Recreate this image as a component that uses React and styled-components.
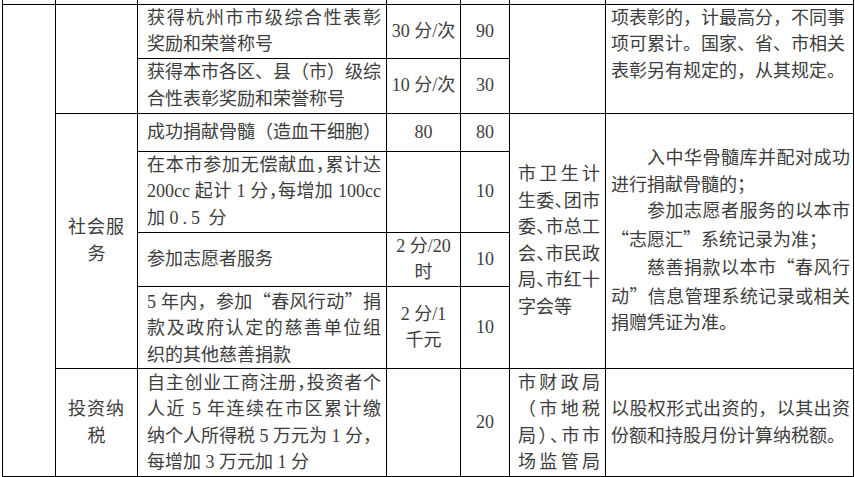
import styled, { createGlobalStyle } from 'styled-components';

const GlobalStyle = createGlobalStyle`
  html, body {
    margin: 0;
    padding: 0;
    background: #fff;
  }
  body {
    width: 855px;
    height: 477px;
    overflow: hidden;
    font-family: "Liberation Serif", "Noto Sans CJK SC", serif;
  }
`;

const Page = styled.div`
  padding-left: 2px;
`;

const Sheet = styled.table`
  border-collapse: collapse;
  table-layout: fixed;
  width: 851px;
  color: #3d3d3d;
  font-size: 18px;
  line-height: 26.5px;
`;

const Col = styled.col`
  width: ${(p) => p.$w}px;
`;

const Row = styled.tr`
  height: ${(p) => p.$h}px;
`;

const Cell = styled.td`
  border: 1px solid #000;
  padding: ${(p) => p.$pad || '0'};
  text-align: ${(p) => p.$align || 'left'};
  vertical-align: ${(p) => p.$valign || 'middle'};
  overflow: hidden;
`;

const StubCell = styled.td`
  border: 1px solid #000;
  border-top: none;
  padding: 0;
`;

// 一行文字：非末行两端对齐，仿 Word 的分散排版
const Line = styled.div`
  white-space: nowrap;
  text-align: ${(p) => (p.$fill ? 'justify' : 'inherit')};
  text-align-last: ${(p) => (p.$fill ? 'justify' : 'auto')};
  text-indent: ${(p) => (p.$indent ? '2em' : '0')};
  letter-spacing: ${(p) => p.$spacing || 'normal'};
`;

// 标点挤压成半角
const Punct = styled.span`
  font-feature-settings: "halt";
`;

// 中文引号用全角字形
const Quote = styled.span`
  font-family: "Noto Sans CJK SC", sans-serif;
  font-feature-settings: "fwid";
`;

const Spaced = styled.span`
  letter-spacing: 4px;
`;

const Lines = ({ items, fill = true }) => (
  <>
    {items.map((t, i) => (
      <Line key={i} $fill={fill && i < items.length - 1}>{t}</Line>
    ))}
  </>
);

const ITEM_PAD = '0 5px 0 9px';
const NOTE_PAD = '0 3px 0 5px';
const DEPT_PAD = '0 5px 0 8px';

const App = () => (
  <Page>
    <GlobalStyle />
    <Sheet>
      <colgroup>
        <Col $w={53} />
        <Col $w={82} />
        <Col $w={249} />
        <Col $w={74} />
        <Col $w={49} />
        <Col $w={96} />
        <Col $w={248} />
      </colgroup>
      <tbody>
        <Row $h={4}>
          <StubCell />
          <StubCell />
          <StubCell />
          <StubCell />
          <StubCell />
          <StubCell />
          <StubCell />
        </Row>

        {/* 表彰奖励 */}
        <Row $h={53}>
          <Cell rowSpan={7} />
          <Cell rowSpan={2} />
          <Cell $pad={ITEM_PAD}>
            <Lines items={['获得杭州市市级综合性表彰', '奖励和荣誉称号']} />
          </Cell>
          <Cell $align="center">30 分/次</Cell>
          <Cell $align="center">90</Cell>
          <Cell rowSpan={2} />
          <Cell rowSpan={2} $valign="top" $pad={NOTE_PAD}>
            <Lines
              items={[
                '项表彰的，计最高分，不同事',
                '项可累计。国家、省、市相关',
                '表彰另有规定的，从其规定。',
              ]}
              fill={false}
            />
          </Cell>
        </Row>
        <Row $h={55}>
          <Cell $pad={ITEM_PAD}>
            <Lines items={['获得本市各区、县（市）级综', '合性表彰奖励和荣誉称号']} />
          </Cell>
          <Cell $align="center">10 分/次</Cell>
          <Cell $align="center">30</Cell>
        </Row>

        {/* 社会服务 */}
        <Row $h={38}>
          <Cell rowSpan={4} $align="center">
            <Line $spacing="1px">社会服</Line>
            <Line>务</Line>
          </Cell>
          <Cell $pad={ITEM_PAD}>成功捐献骨髓（造血干细胞）</Cell>
          <Cell $align="center">80</Cell>
          <Cell $align="center">80</Cell>
          <Cell rowSpan={4} $pad={DEPT_PAD}>
            <Line $fill>市卫生计</Line>
            <Line $fill>生委<Punct>、</Punct>团市</Line>
            <Line $fill>委<Punct>、</Punct>市总工</Line>
            <Line $fill>会<Punct>、</Punct>市民政</Line>
            <Line $fill>局<Punct>、</Punct>市红十</Line>
            <Line>字会等</Line>
          </Cell>
          <Cell rowSpan={4} $pad={NOTE_PAD}>
            <Line $fill $indent>入中华骨髓库并配对成功</Line>
            <Line>进行捐献骨髓的；</Line>
            <Line $fill $indent>参加志愿者服务的以本市</Line>
            <Line><Quote>“</Quote>志愿汇<Quote>”</Quote>系统记录为准；</Line>
            <Line $fill $indent>慈善捐款以本市<Quote>“</Quote>春风行</Line>
            <Line $fill>动<Quote>”</Quote>信息管理系统记录或相关</Line>
            <Line>捐赠凭证为准。</Line>
          </Cell>
        </Row>
        <Row $h={81}>
          <Cell $pad={ITEM_PAD}>
            <Line $fill>在本市参加无偿献血<Punct>，</Punct>累计达</Line>
            <Line $fill>200cc 起计 1 分<Punct>，</Punct>每增加 100cc</Line>
            <Line>加 <Spaced>0.5</Spaced> 分</Line>
          </Cell>
          <Cell />
          <Cell $align="center">10</Cell>
        </Row>
        <Row $h={53}>
          <Cell $pad={ITEM_PAD}>参加志愿者服务</Cell>
          <Cell $align="center">
            <Line>2 分/20</Line>
            <Line>时</Line>
          </Cell>
          <Cell $align="center">10</Cell>
        </Row>
        <Row $h={81}>
          <Cell $pad={ITEM_PAD}>
            <Line $fill>5 年内，参加<Quote>“</Quote>春风行动<Quote>”</Quote>捐</Line>
            <Line $fill>款及政府认定的慈善单位组</Line>
            <Line>织的其他慈善捐款</Line>
          </Cell>
          <Cell $align="center">
            <Line>2 分/1</Line>
            <Line>千元</Line>
          </Cell>
          <Cell $align="center">10</Cell>
        </Row>

        {/* 投资纳税 */}
        <Row $h={108}>
          <Cell $align="center">
            <Line $spacing="1px">投资纳</Line>
            <Line>税</Line>
          </Cell>
          <Cell $pad={ITEM_PAD}>
            <Line $fill>自主创业工商注册<Punct>，</Punct>投资者个</Line>
            <Line $fill>人近 5 年连续在市区累计缴</Line>
            <Line $fill>纳个人所得税 5 万元为 1 分，</Line>
            <Line>每增加 3 万元加 1 分</Line>
          </Cell>
          <Cell />
          <Cell $align="center">20</Cell>
          <Cell $pad={DEPT_PAD}>
            <Line $fill>市财政局</Line>
            <Line $fill>（市地税</Line>
            <Line $fill>局<Punct>）、</Punct>市市</Line>
            <Line $fill>场监管局</Line>
          </Cell>
          <Cell $pad={NOTE_PAD}>
            <Lines items={['以股权形式出资的，以其出资', '份额和持股月份计算纳税额。']} />
          </Cell>
        </Row>
      </tbody>
    </Sheet>
  </Page>
);

export default App;
